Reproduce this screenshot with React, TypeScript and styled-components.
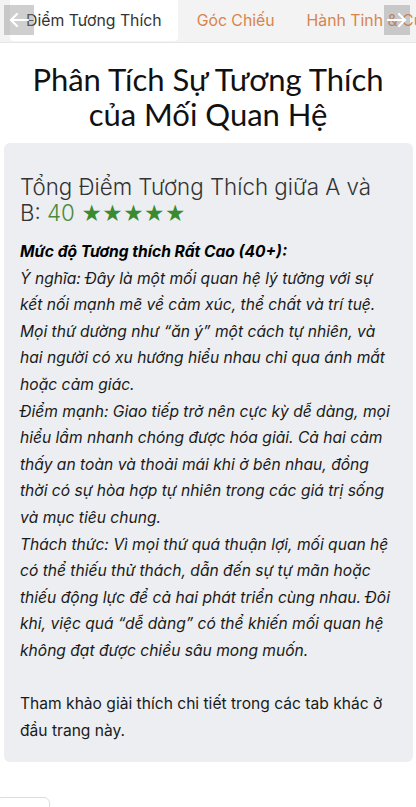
import React from "react";
import styled, { createGlobalStyle } from "styled-components";

const GlobalStyle = createGlobalStyle`
  html, body {
    margin: 0;
    padding: 0;
    background: #ffffff;
  }
  body {
    font-family: Inter, "Noto Sans", "Liberation Sans", sans-serif;
    color: #222;
  }
  * { box-sizing: border-box; }
`;

const Page = styled.div`
  width: 416px;
  min-height: 807px;
  overflow: hidden;
`;

const TabBar = styled.nav`
  position: relative;
  display: flex;
  height: 43px;
  padding-left: 10px;
  background: #f3f3f3;
  border-bottom: 1px solid #e6e6e6;
  white-space: nowrap;
  overflow: hidden;
`;

const Tab = styled.div<{ $active?: boolean }>`
  flex: none;
  display: flex;
  align-items: center;
  height: 41px;
  padding: 0 16px;
  margin-right: ${(p) => (p.$active ? "3px" : "0")};
  font-size: 15.8px;
  color: ${(p) => (p.$active ? "#333" : "#d9834c")};
  background: ${(p) => (p.$active ? "#ffffff" : "transparent")};
  border-radius: 0 0 4px 4px;
`;

const ScrollButton = styled.button<{ $side: "left" | "right" }>`
  position: absolute;
  top: 5px;
  ${(p) => (p.$side === "left" ? "left: 4px;" : "right: 6px;")}
  width: ${(p) => (p.$side === "left" ? "30px" : "26px")};
  height: 30px;
  padding: 0;
  border: none;
  background: rgba(140, 140, 140, 0.42);
  display: flex;
  align-items: center;
  justify-content: center;
  color: #fff;
`;

const Title = styled.h1`
  margin: 19px 0 11px;
  text-align: center;
  font-family: Lato, "Noto Sans", sans-serif;
  font-weight: 400;
  font-size: 31px;
  line-height: 35px;
  color: #111;
`;

const Card = styled.section`
  margin: 0 3px 0 4px;
  padding: 31px 16px 18px;
  background: #eceef1;
  border-radius: 6px;
`;

const ScoreHeading = styled.h2`
  margin: 0 0 14px;
  font-weight: 300;
  font-size: 22.3px;
  line-height: 25.5px;
  color: #333;
`;

const Score = styled.span`
  color: #4a8c3c;
`;

const Stars = styled.span`
  font-size: 20px;
  line-height: 20px;
  color: #3a8a30;
`;

const Body = styled.div`
  font-size: 15.6px;
  line-height: 26.6px;
  color: #1a1a1a;
`;

const Level = styled.div`
  font-weight: 700;
  font-style: italic;
  color: #000;
`;

const Italic = styled.div`
  font-style: italic;
`;

const Plain = styled.p`
  margin: 26.6px 0 0;
`;

const FooterButton = styled.div`
  margin: 35px 0 0 -4px;
  width: 54px;
  height: 20px;
  border: 1px solid #ddd;
  border-radius: 6px;
  background: #fff;
`;

const Arrow = ({ dir }: { dir: "left" | "right" }) => (
  <svg width="22" height="16" viewBox="0 0 22 16" fill="none" stroke="#fff" strokeWidth="2.2" strokeLinecap="round" strokeLinejoin="round">
    {dir === "left" ? (
      <>
        <path d="M20 8H3" />
        <path d="M9 2L3 8l6 6" />
      </>
    ) : (
      <>
        <path d="M2 8h17" />
        <path d="M13 2l6 6-6 6" />
      </>
    )}
  </svg>
);

export default function App() {
  return (
    <Page>
      <GlobalStyle />
      <TabBar>
        <Tab $active>Điểm Tương Thích</Tab>
        <Tab>Góc Chiếu</Tab>
        <Tab>Hành Tinh &amp; Cung</Tab>
        <ScrollButton $side="left" aria-label="Trước">
          <Arrow dir="left" />
        </ScrollButton>
        <ScrollButton $side="right" aria-label="Sau">
          <Arrow dir="right" />
        </ScrollButton>
      </TabBar>

      <Title>
        Phân Tích Sự Tương Thích
        <br />
        của Mối Quan Hệ
      </Title>

      <Card>
        <ScoreHeading>
          Tổng Điểm Tương Thích giữa A và B: <Score>40</Score>{" "}
          <Stars>★★★★★</Stars>
        </ScoreHeading>
        <Body>
          <Level>Mức độ Tương thích Rất Cao (40+):</Level>
          <Italic>
            Ý nghĩa: Đây là một mối quan hệ lý tưởng với sự kết nối mạnh mẽ về
            cảm xúc, thể chất và trí tuệ. Mọi thứ dường như “ăn ý” một cách tự
            nhiên, và hai người có xu hướng hiểu nhau chỉ qua ánh mắt hoặc cảm
            giác.
          </Italic>
          <Italic>
            Điểm mạnh: Giao tiếp trở nên cực kỳ dễ dàng, mọi hiểu lầm nhanh
            chóng được hóa giải. Cả hai cảm thấy an toàn và thoải mái khi ở bên
            nhau, đồng thời có sự hòa hợp tự nhiên trong các giá trị sống và mục
            tiêu chung.
          </Italic>
          <Italic>
            Thách thức: Vì mọi thứ quá thuận lợi, mối quan hệ có thể thiếu thử
            thách, dẫn đến sự tự mãn hoặc thiếu động lực để cả hai phát triển
            cùng nhau. Đôi khi, việc quá “dễ dàng” có thể khiến mối quan hệ
            không đạt được chiều sâu mong muốn.
          </Italic>
          <Plain>
            Tham khảo giải thích chi tiết trong các tab khác ở đầu trang này.
          </Plain>
        </Body>
      </Card>
      <FooterButton />
    </Page>
  );
}
